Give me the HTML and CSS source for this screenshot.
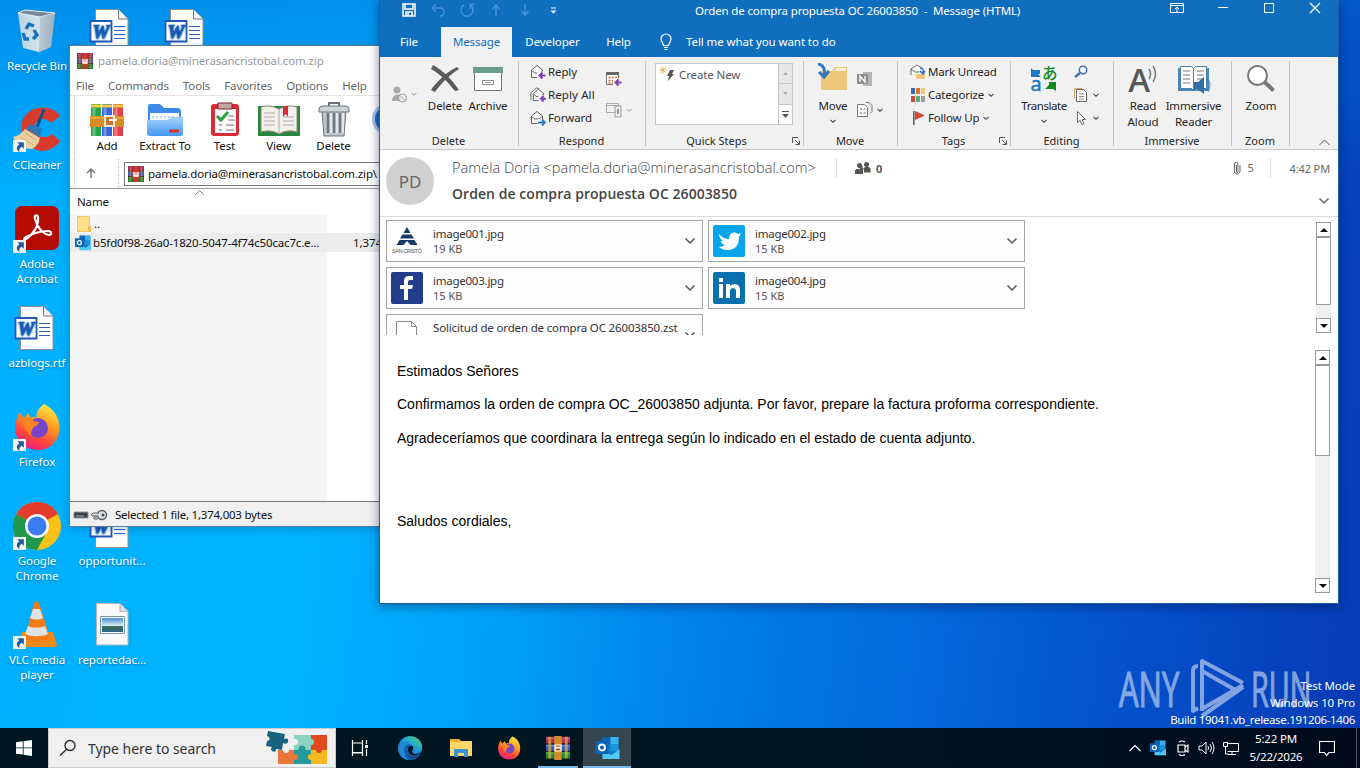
FILE: index.html
```html
<!DOCTYPE html>
<html lang="en">
<head>
<meta charset="utf-8">
<title>Desktop</title>
<link rel="stylesheet" href="styles.css">
</head>
<body>
<svg width="0" height="0" class="defs">
  <defs>
    <linearGradient id="fox" x1="0.8" y1="0" x2="0.3" y2="1"><stop offset="0" stop-color="#fff04a"/><stop offset=".4" stop-color="#ff9a1e"/><stop offset=".75" stop-color="#ff4040"/><stop offset="1" stop-color="#e3208c"/></linearGradient>
    <linearGradient id="edge" x1="0" y1="1" x2="1" y2="0"><stop offset="0" stop-color="#0c59a4"/><stop offset=".5" stop-color="#1b9de2"/><stop offset="1" stop-color="#5bd95b"/></linearGradient>
    <linearGradient id="fold" x1="0" y1="0" x2="0" y2="1"><stop offset="0" stop-color="#a5d3ff"/><stop offset="1" stop-color="#4598ee"/></linearGradient>
    <linearGradient id="bin" x1="0" y1="0" x2="1" y2="0"><stop offset="0" stop-color="#cfd9e0"/><stop offset=".6" stop-color="#e9eef1"/><stop offset="1" stop-color="#8fa3b1"/></linearGradient>
    <linearGradient id="sky" x1="0" y1="0" x2="0" y2="1"><stop offset="0" stop-color="#4d8fd0"/><stop offset=".55" stop-color="#d9edf5"/><stop offset=".6" stop-color="#3c6e58"/><stop offset="1" stop-color="#2b6484"/></linearGradient>
  </defs>
  <symbol id="arrow" viewBox="0 0 12 12"><path d="M0 0h12v12H0z" fill="#f4f4f4"/><path d="M4 2h6v6L8 6.300C6 7.500 5.500 9 6 11 3 9.500 2.500 6.500 5.800 4z" fill="#225a9c"/></symbol>
  <symbol id="word" viewBox="0 0 48 48"><path d="M7.500 4.500h23L40 14v33.500H7.500z" fill="#fff" stroke="#8a8f96"/><path d="M30.500 4.500V14H40" fill="#f4f4f4" stroke="#777"/><path d="M26 21.500h11M26 25.500h11M26 29.500h11M26 33.500h11" stroke="#2b62ba" stroke-width="1.200"/><path d="M2.500 16h21v20.500h-21z" fill="#fff" stroke="#2058b8" stroke-width="1.800"/><text x="13" y="33" text-anchor="middle" font-family="Liberation Serif,serif" font-weight="bold" font-style="italic" font-size="19" fill="#2058b8" stroke="#2058b8" stroke-width=".7">W</text></symbol>
  <symbol id="rar" viewBox="0 0 32 32"><path d="M0 0h32v11H0z" fill="#a42868"/><path d="M0 11h32v10H0z" fill="#3558c0"/><path d="M0 21h32v11H0z" fill="#218032"/><path d="M0 9h32v2H0zM0 20h32v2H0z" fill="#251a20"/><path d="M3 1h4v30H3zM25 1h4v30h-4z" fill="#d79b38" opacity=".5"/><path d="M11 0h10v32H11z" fill="#c23a25"/><path d="M9 9h14v14H9z" fill="#d8452c"/><path d="M12 12v8h8v-8M16 13v6" fill="none" stroke="#fff" stroke-width="2.600"/></symbol>
  <symbol id="rarbig" viewBox="0 0 32 32"><path d="M0 1h32v9H0z" fill="#b02c5c"/><path d="M0 11h32v9H0z" fill="#3558c0"/><path d="M0 21h32v9H0z" fill="#1f8a38"/><path d="M0 3h32" stroke="#d8608a" stroke-width="1.500"/><path d="M0 13h32" stroke="#6d94e6" stroke-width="1.500"/><path d="M0 23h32" stroke="#55bb55" stroke-width="1.500"/><path d="M0 10h32v1H0zM0 20h32v1H0z" fill="#251a20"/><path d="M3 1h4v29H3zM25 1h4v29h-4z" fill="#e0b040" opacity=".7"/><path d="M11 0h10v32H11z" fill="#d08a2a"/><path d="M12 12h8v3h-8zM12 16h8M12 16v4h8v-4z" fill="#b0571c" stroke="#fff" stroke-width="1.600"/></symbol>
  <symbol id="outlook" viewBox="0 0 24 24"><path d="M7 1h16v20H7z" fill="#1678c9"/><path d="M7 1h8v7H7z" fill="#0b62b0"/><path d="M15 1h8v7h-8z" fill="#38b2ef"/><path d="M15 8h8v7h-8z" fill="#1596dc"/><path d="M7 15l9 4 8-6v10H7z" fill="#53c9f5"/><path d="M0 5h13v13H0z" fill="#0864b8"/><circle cx="6.500" cy="11.500" r="3" fill="none" stroke="#fff" stroke-width="1.900"/></symbol>
  <symbol id="firefox" viewBox="0 0 48 48"><path d="M31 1C43 7 48 17 46 30 44 40 35 47 25 47 12 47 2 38 2 24 2 18 5 15 6 9l5 6 4-5 3 5c4-2 5-1 6 0-2-5 2-10 7-14z" fill="url(#fox)"/><circle cx="25" cy="25" r="10" fill="#7645c9"/><path d="M8 16c5-2 10-1 13 2l5 1c-1 4-5 4-6 6-2 3-3 6 0 9-6-3-9-9-12-18z" fill="#ff831f"/></symbol>
  <symbol id="chev" viewBox="0 0 8 6"><path d="M1.500 2L4 4.200 6.500 2" fill="none" stroke="currentColor" stroke-width="1.100"/></symbol>
  <symbol id="chevbig" viewBox="0 0 12 8"><path d="M1.500 1.500L6 6l4.500-4.500" fill="none" stroke="currentColor" stroke-width="1.500"/></symbol>
  <symbol id="env" viewBox="0 0 16 16"><path d="M1.500 6v7.500h11V6L7 1.500z" fill="#fafafa" stroke="#5d5d5d"/><path d="M2 6.500L4.500 9h5L12 6.500" fill="none" stroke="#5d5d5d"/></symbol>
  <symbol id="back" viewBox="0 0 16 16"><path d="M7 7.500h9v8H7z" fill="#f6f6f6"/><path d="M15.500 11.500H10M12.500 8.500l-3 3 3 3" fill="none" stroke="#7c3db4" stroke-width="1.900"/></symbol>
  <symbol id="launch" viewBox="0 0 8 8"><path d="M.5 6V.5H6M3 3l4 4M7.500 3.500v4h-4" fill="none" stroke="#555"/></symbol>
</svg>

<main class="desktop">
  <div class="shortcuts">
    <div class="cell c1 r1"><svg viewBox="0 0 48 48"><path d="M5 8L42 8 38 42 26 47 10 43z" fill="url(#bin)" opacity=".9"/><path d="M5 8l7-3 30 3-15 4z" fill="#78899a" stroke="#e8f1f6"/><path d="M27 12l-1 35 12-5 4-34z" fill="#aab8c2" opacity=".65"/><g fill="none" stroke="#1575c0" stroke-width="3.400"><path d="M13 24l3-5 5 2M10 28l2 6h4M20 34l4-4-3-5"/></g></svg><span>Recycle Bin</span></div>
    <div class="cell c1 r2"><svg viewBox="0 0 48 48"><path d="M47 12C38-1 14 1 9 18c-2 15 6 27 19 29 8 0 15-4 19-10l-8-7c-6 6-18 3-18-7 1-8 12-11 17-4z" fill="#d83b2b"/><path d="M31 5L24 23" stroke="#174f86" stroke-width="3"/><path d="M17 20l12 5-2 8-14-8z" fill="#3179b4"/><path d="M0 33c5-1 9-4 12-8l15 9c-1 5-4 9-8 11l-12-1z" fill="#ecd0a2"/><path d="M8 33l12 8M12 29l11 7" stroke="#cda670"/><use href="#arrow" x="0" y="36" width="13" height="13"/></svg><span>CCleaner</span></div>
    <div class="cell c1 r3"><svg viewBox="0 0 48 48"><rect x="2" y="1" width="44" height="44" rx="7" fill="#b30b00"/><path d="M13 34c8-5 13-14 12-22-1-3-4-2-3 2 3 9 8 15 14 16 3 0 3-4-1-4-9 0-16 3-22 6-3 2-2 4 0 2z" fill="none" stroke="#fff" stroke-width="2.200"/><use href="#arrow" x="0" y="35" width="13" height="13"/></svg><span>Adobe<br>Acrobat</span></div>
    <div class="cell c1 r4"><svg viewBox="0 0 48 48"><use href="#word"/></svg><span>azblogs.rtf</span></div>
    <div class="cell c1 r5"><svg viewBox="0 0 48 48"><use href="#firefox"/><use href="#arrow" x="0" y="36" width="13" height="13"/></svg><span>Firefox</span></div>
    <div class="cell c1 r6"><svg viewBox="0 0 48 48"><circle cx="24" cy="24" r="24" fill="#fbc116"/><path d="M24 24L3.200 12A24 24 0 0 1 44.800 12z" fill="#e33b2e"/><path d="M3.200 12A24 24 0 0 0 24 48L34 30 24 24z" fill="#23974c"/><circle cx="24" cy="24" r="12" fill="#fff"/><circle cx="24" cy="24" r="9.500" fill="#3b7df0"/><use href="#arrow" x="0" y="35" width="13" height="13"/></svg><span>Google<br>Chrome</span></div>
    <div class="cell c1 r7"><svg viewBox="0 0 48 48"><path d="M9 31h31l4 13-1 2H6z" fill="#f18a16"/><path d="M21 2q2.500-3 5 0l11 35c-6 5-20 5-25 0z" fill="#f47c13"/><path d="M20 8h7l3 9c-4 2-9 2-13 0zM15 25c5 2 13 2 17 0l3 8c-6 3-17 3-23 0z" fill="#dfe3e6"/><use href="#arrow" x="0" y="35" width="13" height="13"/></svg><span>VLC media<br>player</span></div>
    <div class="cell c2 r1"><svg viewBox="0 0 48 48"><use href="#word"/></svg></div>
    <div class="cell c3 r1"><svg viewBox="0 0 48 48"><use href="#word"/></svg></div>
    <div class="cell c2 r6"><svg viewBox="0 0 48 48"><use href="#word"/></svg><span>opportunit...</span></div>
    <div class="cell c2 r7"><svg viewBox="0 0 48 48"><path d="M8.500 2.500H32l8 8V44H8.500z" fill="#fafafa" stroke="#b0b6ba"/><path d="M32 2.500v8h8" fill="#ddd" stroke="#b0b6ba"/><path d="M12.500 15.500h24v17h-24z" fill="#fff" stroke="#7694ac"/><path d="M14 17h21v14H14z" fill="url(#sky)"/></svg><span>reportedac...</span></div>
  </div>

  <div class="watermark">
    <span class="wm-any">ANY</span>
    <svg width="58" height="62" viewBox="0 0 58 62"><path d="M9 9Q4 9 4 14v40l5-3M13 54V4L54 26M13 14l37 21M54 28L13 52M13 59l41-29" fill="none" stroke="#fff" stroke-width="4" stroke-linejoin="round"/></svg>
    <span class="wm-run">RUN</span>
  </div>
  <div class="build">Test Mode<br>Windows 10 Pro<br><span class="tight">Build 19041.vb_release.191206-1406</span></div>

  <section class="winrar">
    <div class="w-title"><svg width="16" height="16"><use href="#rar"/></svg><span>pamela.doria@minerasancristobal.com.zip</span></div>
    <nav class="w-menu"><span>File</span><span>Commands</span><span>Tools</span><span>Favorites</span><span>Options</span><span>Help</span></nav>
    <div class="w-tools">
      <div class="tool t1"><svg viewBox="0 0 36 36"><path d="M2 2h10v32H2z" fill="#25a34a"/><path d="M13 2h10v32H13z" fill="#3266d8"/><path d="M24 2h10v32H24z" fill="#e43d4b"/><path d="M2 4h10M13 4h10M24 4h10" stroke="#f1cc45" stroke-width="3"/><path d="M5 6v28M16 6v28M27 6v28" stroke="#fff" opacity=".3" stroke-width="3"/><path d="M1 14h34v11H1z" fill="#d98b1f"/><path d="M1 16h34" stroke="#f2c261"/><path d="M16 14h9v10h-9z" fill="#c5782a" stroke="#f8ead4" stroke-width="2"/><path d="M20 18h8" stroke="#f0f0f0" stroke-width="2"/></svg><span>Add</span></div>
      <div class="tool t2"><svg viewBox="0 0 36 36"><path d="M1 4q0-2 2-2h10l4 4h14q3 0 3 4v12H1z" fill="#3c8bea"/><path d="M3 11h29v12H3z" fill="#f6fbff"/><path d="M5 15h25" stroke="#9ab" stroke-dasharray="2 2"/><path d="M0 18h20l4-3h12v16q0 3-3 3H3q-3 0-3-3z" fill="url(#fold)"/><path d="M22 29h10" stroke="#db3232" stroke-width="3"/></svg><span>Extract To</span></div>
      <div class="tool t3"><svg viewBox="0 0 36 36"><rect x="4" y="2" width="28" height="32" rx="3" fill="#d92c3b"/><path d="M8 7h21v24H8z" fill="#fafafa"/><path d="M11 1h14v6H11z" fill="#c5a5a4" stroke="#87222b"/><path d="M10 14l4 4 7-8" fill="none" stroke="#2f9b45" stroke-width="3"/><path d="M21 18h7M21 14h6M12 23h3M19 23h8M12 28h3M19 28h8" stroke="#777"/></svg><span>Test</span></div>
      <div class="tool t4"><svg class="wide" viewBox="0 0 42 36"><path d="M0 4h42v30H0z" fill="#27883d"/><path d="M3 5q9-3 18 2 9-5 18-2v25q-10-3-18 2-8-5-18-2z" fill="#f4f1ec" stroke="#887"/><path d="M21 7v25M6 11h11M6 15h11M6 19h11M6 23h11M25 15h11M25 19h11M25 23h11" stroke="#aaa"/><path d="M25 4h5v11l-2.500-3-2.500 3z" fill="#d82d39"/></svg><span>View</span></div>
      <div class="tool t5"><svg viewBox="0 0 36 36"><path d="M6 9h24l-2 25H8z" fill="#bfc8ce" stroke="#69747e"/><path d="M12 11v20M18 11v20M24 11v20" stroke="#6f7981" stroke-width="2.500"/><path d="M15 11v20M21 11v20M27 11v20" stroke="#fff" stroke-width="1.200"/><path d="M3 7q0-3 4-3h22q4 0 4 3v3H3z" fill="#cbd3d9" stroke="#67727c"/><path d="M13 4V1h10v3" fill="none" stroke="#68737d" stroke-width="2"/></svg><span>Delete</span></div>
      <div class="tool t6"><svg viewBox="0 0 36 36"><circle cx="16" cy="17" r="14.500" fill="#2469c7" stroke="#a9c4e2" stroke-width="3"/></svg><span>Find</span></div>
    </div>
    <div class="w-addr"><div class="up"><svg width="12" height="12" viewBox="0 0 12 12"><path d="M6 11V2M2 6l4-4 4 4" fill="none" stroke="#777" stroke-width="1.500"/></svg></div><div class="addr"><svg width="16" height="16"><use href="#rar"/></svg><span>pamela.doria@minerasancristobal.com.zip\</span></div></div>
    <div class="w-list">
      <div class="w-head"><span>Name</span><svg class="sort" width="9" height="5" viewBox="0 0 9 5"><path d="M.5 4.500l4-4 4 4" fill="none" stroke="#777"/></svg></div>
      <div class="w-row"><svg width="14" height="16" viewBox="0 0 14 16"><path d="M0 0h13v16H0z" fill="#ffdf8a"/><path d="M11 10h3v6h-3z" fill="#eebd4f"/><path d="M.5.500h12v15H.5z" fill="none" stroke="#eec663"/></svg><span>..</span></div>
      <div class="w-row sel"><svg width="16" height="16"><use href="#outlook"/></svg><span class="fname">b5fd0f98-26a0-1820-5047-4f74c50cac7c.e...</span><span class="size">1,374,003</span></div>
    </div>
    <div class="w-status"><svg width="35" height="14" viewBox="0 0 35 14"><path d="M1 4h14v6H1z" fill="#34404a" stroke="#999"/><path d="M3 8h8" stroke="#a8b6bf"/><circle cx="29" cy="7" r="4.500" fill="#ddd" stroke="#596168" stroke-width="1.400"/><circle cx="30" cy="7" r="1.500" fill="#555"/><path d="M25 5h-5l-2 2 2 1h5M24 9h-3v2h4" fill="#ddd" stroke="#596168"/></svg><span>Selected 1 file, 1,374,003 bytes</span></div>
  </section>

  <section class="mail">
    <header class="o-title">
      <div class="qat">
        <svg width="16" height="16" viewBox="0 0 16 16"><path d="M2 2h12v12H2zM4 2v5h8V2M5 14v-4h6v4M7 11v3" fill="none" stroke="#fff" stroke-width="1.500"/></svg>
        <svg class="dim" width="16" height="16" viewBox="0 0 16 16"><path d="M6 2L2 6l4 4M2.500 6H10q4 0 4 4t-4 4" fill="none" stroke="#4590d8" stroke-width="1.500"/></svg>
        <svg class="dim" width="16" height="16" viewBox="0 0 16 16"><path d="M5 3a6 6 0 1 0 6 0M11 7V2.500h4" fill="none" stroke="#4590d8" stroke-width="1.500"/></svg>
        <svg class="dim" width="16" height="16" viewBox="0 0 16 16"><path d="M8 14V3M4.500 7L8 3l3.500 4" fill="none" stroke="#4590d8" stroke-width="1.500"/></svg>
        <svg class="dim" width="16" height="16" viewBox="0 0 16 16"><path d="M8 2v11M4.500 9L8 13l3.500-4" fill="none" stroke="#4590d8" stroke-width="1.500"/></svg>
        <svg width="16" height="16" viewBox="0 0 16 16"><path d="M5 6h5" stroke="#fff"/><path d="M4.500 8.500h6L7.500 11.500z" fill="#fff"/></svg>
      </div>
      <div class="o-name">Orden de compra propuesta OC 26003850&nbsp; -&nbsp; Message (HTML)</div>
      <div class="wbtns">
        <svg width="14" height="12" viewBox="0 0 14 12"><path d="M.5 1.500h13v9H.5zM.5 3.500h13M7 10V5M5 7l2-2 2 2" fill="none" stroke="#fff"/></svg>
        <svg width="12" height="12" viewBox="0 0 12 12"><path d="M1 5.500h10" stroke="#fff"/></svg>
        <svg width="12" height="12" viewBox="0 0 12 12"><path d="M1.500 1.500h9v9h-9z" fill="none" stroke="#fff"/></svg>
        <svg width="12" height="12" viewBox="0 0 12 12"><path d="M1 1l10 10M11 1L1 11" stroke="#fff" stroke-width="1.200"/></svg>
      </div>
    </header>
    <nav class="tabs"><span class="tab tb1">File</span><span class="tab active">Message</span><span class="tab tb3">Developer</span><span class="tab tb4">Help</span><svg width="14" height="18" viewBox="0 0 14 18"><path d="M4.500 12.500C4.500 10 2 9 2 6a5 5 0 0 1 10 0c0 3-2.500 4-2.500 6.500zM5 14.500h4M5.500 16.500h3" fill="none" stroke="#fff" stroke-width="1.200"/></svg><span class="tell">Tell me what you want to do</span></nav>

    <div class="ribbon">
      <div class="grp g1"><div class="gbody">
        <div class="junk"><svg width="16" height="17" viewBox="0 0 16 17"><circle cx="6" cy="4" r="3.500" fill="#aaa"/><path d="M1 15c0-8 10-8 10-3v3z" fill="#aaa"/><circle cx="11.500" cy="12" r="4" fill="#eee" stroke="#999"/><path d="M9 9.500l5 5" stroke="#999"/></svg><svg class="cv pale" width="8" height="6"><use href="#chev"/></svg></div>
        <div class="big b-del"><svg width="32" height="32" viewBox="0 0 32 32"><path d="M4 2c9 5 18 13 26 25l-4 1C18 18 11 11 2 6z" fill="#5b5b5b"/><path d="M28 4l2 2C21 12 12 20 6 29l-4-2C9 17 18 9 28 4z" fill="#5b5b5b"/></svg><span>Delete</span></div>
        <div class="big b-arc"><svg width="32" height="32" viewBox="0 0 32 32"><path d="M2.500 9h27v18.500h-27z" fill="#fff" stroke="#777"/><path d="M1 4h30v6H1z" fill="#6aa08d"/><path d="M10.500 17.500h11v4h-11z" fill="#fff" stroke="#888"/><path d="M13 19.500h6" stroke="#999"/></svg><span>Archive</span></div>
      </div><div class="glabel">Delete</div></div>
      <div class="grp g2"><div class="gbody">
        <div class="rows"><div><svg width="16" height="16"><use href="#env"/><use href="#back"/></svg><span>Reply</span></div><div><svg width="16" height="16" viewBox="-2 -1 17 17"><path d="M-1 13V5l6-5 3 1" fill="none" stroke="#666"/><use href="#env" width="16" height="16"/><use href="#back" width="16" height="16"/></svg><span class="ra">Reply All</span></div><div><svg width="16" height="16" viewBox="0 0 16 16"><use href="#env"/><path d="M7.500 9h8v7h-8z" fill="#f6f6f6"/><path d="M8 12.500h6M12 9.500l3 3-3 3" fill="none" stroke="#2f75bd" stroke-width="1.900"/></svg><span>Forward</span></div></div>
        <div class="pair"><svg width="16" height="16" viewBox="0 0 16 16"><path d="M.5 2.500h12v11H.5z" fill="#fff" stroke="#777"/><path d="M0 1h13v3H0z" fill="#666"/><path d="M2.500 6.500h9M2.500 9.500h6M2.500 12h5" stroke="#d46a31" stroke-width="1.500" stroke-dasharray="2 1.200"/><use href="#back"/></svg><div><svg width="16" height="16" viewBox="0 0 16 16"><path d="M.5 1.500h12v9H.5zM.5 3.500h12" fill="none" stroke="#aaa"/><path d="M9 4h6v11H9z" fill="#eee" stroke="#999"/><path d="M11 7h2v5h-2z" fill="#999"/></svg><svg class="cv pale" width="8" height="6"><use href="#chev"/></svg></div></div>
      </div><div class="glabel">Respond</div></div>
      <div class="grp g3"><div class="gbody"><div class="quick"><div class="qmain"><svg width="16" height="16" viewBox="0 0 16 16"><path d="M11 4h4l-2 4h2l-6 7 1-5H8z" fill="#555"/><path d="M4 0v8M0 4h8M1 1l6 6M7 1L1 7" stroke="#e3a953" stroke-width=".8"/></svg><span>Create New</span></div><div class="qscroll"><i><svg width="5" height="3"><path d="M0 3l2.500-3L5 3z" fill="#aaa"/></svg></i><i><svg width="5" height="3"><path d="M0 0h5L2.500 3z" fill="#aaa"/></svg></i><i><svg width="7" height="7"><path d="M0 .5h7" stroke="#555"/><path d="M0 3h7L3.500 7z" fill="#555"/></svg></i></div></div></div><div class="glabel gq">Quick Steps<svg class="launch" width="8" height="8"><use href="#launch"/></svg></div></div>
      <div class="grp g4"><div class="gbody">
        <div class="big b-mov"><svg width="32" height="32" viewBox="0 0 32 32"><path d="M4 8h11l3-4h12v23H4z" fill="#efc77c"/><path d="M17 8l3-3h9v3z" fill="#fff3dd"/><path d="M1 1q8 1 6 12M2 9l5 5 5-6" fill="none" stroke="#3575bd" stroke-width="3"/></svg><span>Move</span><svg class="cv" width="8" height="6"><use href="#chev"/></svg></div>
        <div class="pair p4"><svg width="16" height="16" viewBox="0 0 16 16"><path d="M6 1h9v14H6z" fill="#b4b4b4"/><path d="M0 3h11v10H0z" fill="#8d8d8d"/><path d="M3 11V5l5 6V5" fill="none" stroke="#fff" stroke-width="1.300"/></svg><div><svg width="16" height="16" viewBox="0 0 16 16"><path d="M.5 2.500h7l3 3v9H.5z" fill="#fff" stroke="#777"/><path d="M3 7h2M3 11h2M6.500 7h2M6.500 11h2" stroke="#555"/><path d="M9 .5h3l3 3v6l-2 2" fill="none" stroke="#777"/></svg><svg class="cv" width="8" height="6"><use href="#chev"/></svg></div></div>
      </div><div class="glabel">Move</div></div>
      <div class="grp g5"><div class="gbody">
        <div class="rows"><div><svg width="16" height="16" viewBox="0 0 16 16"><path d="M1 11V5l6-4 5 3" fill="#fff" stroke="#666"/><path d="M1 5l4 3h4" fill="none" stroke="#666"/><path d="M6 10h9v5H6z" fill="#efc77c"/><path d="M10 4q4 0 3 5M10 7l3 3 2-3" fill="none" stroke="#3575bd" stroke-width="1.500"/></svg><span>Mark Unread</span></div><div><svg width="16" height="16" viewBox="0 0 16 16"><path d="M1 1h4v6H1z" fill="#2f6ebb"/><path d="M6 1h4v6H6z" fill="#e27126"/><path d="M11 1h4v6h-4z" fill="#efc77c"/><path d="M1 9h4v6H1z" fill="#cf4a38"/><path d="M6 9h4v6H6z" fill="#63a87c"/><path d="M11 9h4v6h-4z" fill="#9d9d9d"/></svg><span>Categorize</span><svg class="cv" width="8" height="6"><use href="#chev"/></svg></div><div><svg width="16" height="16" viewBox="0 0 16 16"><path d="M3.800 1v14" stroke="#555" stroke-width="1.500"/><path d="M5 1l10 4.500L5 10z" fill="#d54a35"/></svg><span>Follow Up</span><svg class="cv" width="8" height="6"><use href="#chev"/></svg></div></div>
      </div><div class="glabel">Tags<svg class="launch" width="8" height="8"><use href="#launch"/></svg></div></div>
      <div class="grp g6"><div class="gbody">
        <div class="big b-tra"><svg width="32" height="32" viewBox="0 0 32 32"><path d="M3 5l2 2h7v4h-2l3 3H3z" fill="#1979ca"/><path d="M28 28l-3-2h-8l4-4v-3h7z" fill="#0f8a20"/><text x="14" y="16" font-family="Noto Sans CJK JP,sans-serif" font-weight="500" font-size="15.500" fill="#0f8a20">あ</text><text x="2.500" y="28" font-family="Noto Sans,sans-serif" font-size="20" fill="#1979ca" stroke="#1979ca" stroke-width=".4">a</text></svg><span>Translate</span><svg class="cv" width="8" height="6"><use href="#chev"/></svg></div>
        <div class="rows r6b"><div><svg width="14" height="14" viewBox="0 0 14 14"><circle cx="9" cy="5" r="3.700" fill="#fff" stroke="#3a72b5" stroke-width="1.500"/><path d="M6 8l-5 4" stroke="#3a72b5" stroke-width="2.500"/></svg></div><div><svg width="14" height="16" viewBox="0 0 14 16"><path d="M.5 11V1.500H8" fill="none" stroke="#dca365"/><path d="M2.500 2.500h7l3 3v9h-10z" fill="#fff" stroke="#666"/><path d="M5 7h5M5 9.500h5M5 12h5" stroke="#888"/></svg><svg class="cv" width="8" height="6"><use href="#chev"/></svg></div><div><svg width="14" height="16" viewBox="0 0 14 16"><path d="M3.500 1.500v11l2.500-2 2 4 2-1-2-4h3.500z" fill="#fff" stroke="#666"/></svg><svg class="cv" width="8" height="6"><use href="#chev"/></svg></div></div>
      </div><div class="glabel">Editing</div></div>
      <div class="grp g7"><div class="gbody">
        <div class="big b-read"><svg width="32" height="32" viewBox="0 0 32 32"><text x="12" y="29" text-anchor="middle" font-family="Open Sans,sans-serif" font-weight="600" font-size="33" fill="#575757">A</text><path d="M22 6q3 5 0 10M26 3q5 8 0 16" fill="none" stroke="#777" stroke-width="1.500"/></svg><span>Read<br>Aloud</span></div>
        <div class="big b-imm"><svg width="34" height="32" viewBox="0 0 34 32"><path d="M1 5h31v23H1z" fill="#4a86b8"/><path d="M3.500 3.500h11l2 2 2-2h11v22h-11l-2 2-2-2h-11z" fill="#fff" stroke="#4a7fa5"/><path d="M16.500 6v21M6 8h7M6 12h7M6 16h7M6 20h7M20 8h7M20 12h7M20 16h7" stroke="#777"/><path d="M17 19h4l6-5v17l-6-5h-4z" fill="#346ea5"/><path d="M29 18q3 4 0 8M31 15q4 7 0 14" fill="none" stroke="#4b91c2"/></svg><span>Immersive<br>Reader</span></div>
      </div><div class="glabel">Immersive</div></div>
      <div class="grp g8"><div class="gbody"><div class="big b-zoom"><svg width="32" height="32" viewBox="0 0 32 32"><circle cx="12.500" cy="12.500" r="9.500" fill="#fff" stroke="#777" stroke-width="2"/><path d="M19.500 19l9 8.500" stroke="#777" stroke-width="4"/></svg><span>Zoom</span></div></div><div class="glabel">Zoom</div></div>
      <div class="collapse"><svg width="11" height="7" viewBox="0 0 11 7"><path d="M.5 6l5-5 5 5" fill="none" stroke="#555"/></svg></div>
    </div>

    <div class="info">
      <div class="avatar">PD</div>
      <div class="who"><div class="from"><span class="sender">Pamela Doria &lt;pamela.doria@minerasancristobal.com&gt;</span><div class="ppl"><svg width="16" height="14" viewBox="0 0 16 14"><circle cx="4.500" cy="4.500" r="2.500" fill="#555"/><circle cx="11.500" cy="3.500" r="2.500" fill="#555"/><path d="M0 13V9.500q2-3 4.500-1Q7-1 8 9v4z" fill="#555"/><path d="M9 11.500V9L8 7.500Q11.500 4.500 15.500 7v4.500z" fill="#555"/></svg><b>0</b></div></div><div class="subject">Orden de compra propuesta OC 26003850</div></div>
      <div class="meta"><div><svg width="8" height="15" viewBox="0 0 8 15"><path d="M3.500 4v7q.5 1.500 1.500 0V3Q4-.5 1.500 2v9q2.500 4.500 5.500 0V4" fill="none" stroke="#666"/></svg><span class="cnt">5</span><span class="time">4:42 PM</span></div><svg width="12" height="8"><use href="#chevbig"/></svg></div>
    </div>

    <div class="attach">
      <div class="cards">
        <div class="card"><svg width="32" height="32" viewBox="0 0 32 32"><path d="M0 0h32v32H0z" fill="#fff"/><path d="M16 2l3.500 6h-7zM11.500 9.500h9l2.500 4H9zM8.500 15h15l3 5h-7l-3.500-4-3.500 4h-7z" fill="#173a66"/><text x="1" y="28" textLength="30" font-family="Liberation Sans,sans-serif" font-size="5.500" fill="#555">SAN CRISTÓ</text></svg><p>image001.jpg<small>19 KB</small></p><svg class="dd" width="12" height="8"><use href="#chevbig"/></svg></div>
        <div class="card"><svg width="32" height="32" viewBox="0 0 32 32"><rect width="32" height="32" rx="2" fill="#08a5ec"/><path d="M6 9q4 5 10 5c0-7 6-8 9-5l3-1-2 4q0 13-12 13-5 0-8-3 4 0 6-2-4-1-4-4h2q-4-3-4-7z" fill="#fff"/></svg><p>image002.jpg<small>15 KB</small></p><svg class="dd" width="12" height="8"><use href="#chevbig"/></svg></div>
        <div class="card"><svg width="32" height="32" viewBox="0 0 32 32"><rect width="32" height="32" rx="2" fill="#233d8d"/><path d="M13 28V17H9v-4h4V9q0-5 5-5h4v4h-3q-2 0-2 2v3h5l-1 4h-4v11z" fill="#fff"/></svg><p>image003.jpg<small>15 KB</small></p><svg class="dd" width="12" height="8"><use href="#chevbig"/></svg></div>
        <div class="card"><svg width="32" height="32" viewBox="0 0 32 32"><rect width="32" height="32" rx="2" fill="#0871ad"/><path d="M6 12h4v14H6zM6 6h4v4H6zM13 12h4v2q5-4 9 0 1 2 1 4v8h-4v-8q-3-4-6 0v8h-4z" fill="#fff"/></svg><p>image004.jpg<small>15 KB</small></p><svg class="dd" width="12" height="8"><use href="#chevbig"/></svg></div>
        <div class="card zst"><svg width="32" height="32" viewBox="0 0 32 32"><path d="M5.500 2.500h15l5 5V31h-20z" fill="#fff" stroke="#888"/><path d="M20.500 2.500v5h5" fill="none" stroke="#888"/></svg><p>Solicitud de orden de compra OC 26003850.zst<small>1 MB</small></p><svg class="dd" width="12" height="8"><use href="#chevbig"/></svg></div>
      </div>
      <div class="scroll s1"><i class="upb"></i><b></b><em></em><i class="dnb"></i></div>
    </div>

    <div class="body">
      <div class="text"><p>Estimados Señores</p><p>Confirmamos la orden de compra OC_26003850 adjunta. Por favor, prepare la factura proforma correspondiente.</p><p>Agradeceríamos que coordinara la entrega según lo indicado en el estado de cuenta adjunto.</p><p class="bye">Saludos cordiales,</p></div>
      <div class="scroll s2"><i class="upb"></i><b></b><em></em><i class="dnb"></i></div>
    </div>
  </section>
</main>

<footer class="taskbar">
  <div class="start"><svg width="16" height="16" viewBox="0 0 16 16"><path d="M0 2.300L6.800 1.300v6.200H0zM7.600 1.200L16 0v7.500H7.600zM0 8.300h6.800v6.300L0 13.700zM7.600 8.300H16V16l-8.400-1.200z" fill="#fff"/></svg></div>
  <div class="search"><svg width="18" height="18" viewBox="0 0 18 18"><circle cx="11" cy="6.500" r="5" fill="none" stroke="#222" stroke-width="1.300"/><path d="M7.500 10.500L1 16.500" stroke="#222" stroke-width="1.300"/></svg><span>Type here to search</span>
    <svg class="puzzle" width="64" height="36" viewBox="0 0 64 36"><path d="M3 1l17 3-1 5q5-2 4 3-1 3-5 1l-1 7-6-1q0 4-4 2-2-2 0-4l-6-1 1-5q4-1 2-4l-2-1z" fill="#18637f"/><path d="M13 20h16v14H13z" fill="#e9763a"/><path d="M29 5h18v15H29z" fill="#8bd3bf"/><path d="M46 5h16v15H46z" fill="#df4b1f"/><path d="M29 20h17v14H29z" fill="#229a9c"/><path d="M46 20h16v14H46z" fill="#f5b91f"/><circle cx="30" cy="27" r="3" fill="#e9763a"/><circle cx="37" cy="19" r="3.500" fill="#229a9c"/><circle cx="46" cy="12" r="3" fill="#8bd3bf"/><circle cx="54" cy="20" r="3" fill="#df4b1f"/><circle cx="46" cy="27" r="3" fill="#f5b91f"/><circle cx="21" cy="20" r="3" fill="#f0f0f0"/><circle cx="30" cy="12" r="3" fill="#f0f0f0"/></svg></div>
  <div class="apps">
    <div class="tv"><svg width="18" height="18" viewBox="0 0 18 18"><path d="M1.500 1v3h10V1M1.500 17v-3h10v3M1.500 4.500v9h10v-9M15.500 1v4M15.500 10v7" fill="none" stroke="#fff" stroke-width="1.200"/><path d="M14 6h3v3h-3z" fill="#fff"/></svg></div>
    <div class="ed"><svg width="26" height="26" viewBox="0 0 26 26"><circle cx="13" cy="13" r="12" fill="#0f5cab"/><path d="M1 12C3-1 21-3 25 10c1 7-3 9-7 9-4-.5-4-2-2.500-4C17 7 4 6 1 12z" fill="url(#edge)"/><path d="M15.500 15c-1.500 2-1 4 2.500 4 3 0 5-1 6-3-1 3-4 7-8 8-6-1-7-9-.5-9z" fill="#1a4f93"/><path d="M11 14q1-4 5-3 1 2-.500 4-1.500 3 2.500 4 2 0 5-1.500-4 4-8 2.500-4-2-4-6z" fill="#051722"/><path d="M1 13C3 6 10 6 13 9c-8 1-7 11-1 16C6 25 1 20 1 13z" fill="#2487d4"/></svg></div>
    <div><svg width="22" height="20" viewBox="0 0 22 20"><path d="M0 1h9l2 2h11v15H0z" fill="#ffd867"/><path d="M0 1h9l2 3H0z" fill="#f2ae2e"/><path d="M4 11h14v8h-4v-4H8v4H4z" fill="#3c95d4"/></svg></div>
    <div><svg width="24" height="24"><use href="#firefox"/></svg></div>
    <div class="open"><svg width="24" height="24"><use href="#rarbig"/></svg></div>
    <div class="open cur"><svg width="25" height="24"><use href="#outlook"/></svg></div>
  </div>
  <div class="tray">
    <svg width="14" height="14" viewBox="0 0 14 14"><path d="M1.500 10L7 4.500l5.500 5.500" fill="none" stroke="#fff" stroke-width="1.200"/></svg>
    <svg width="16" height="16"><use href="#outlook"/></svg>
    <svg class="cam" width="14" height="16" viewBox="0 0 14 16"><path d="M2 5h7v7H2zM9 7l3-2v7L9 10M3 2q3-2 6 0M3 14.500q3 2 6 0" fill="none" stroke="#fff" stroke-width="1.200"/></svg>
    <svg width="17" height="14" viewBox="0 0 17 14"><path d="M1 5h3l4-4v12L4 9H1zM10 5q1 2 0 4M12 3q3 4 0 8M14 1q4 6 0 12" fill="none" stroke="#fff"/></svg>
    <svg width="16" height="16" viewBox="0 0 16 16"><path d="M5 3.500h10.500v8H4.500M9 12v3M5 14.500h8M.5 2.500h4v4h-4zM2.500 7v7h3" fill="none" stroke="#fff"/></svg>
    <div class="clock">5:22 PM<br>5/22/2026</div>
    <svg width="16" height="17" viewBox="0 0 16 17"><path d="M.5 1.500h15v11H10L7.500 15.500 5.500 12.500h-5z" fill="none" stroke="#fff" stroke-width="1.200"/></svg>
  </div>
</footer>
</body>
</html>
```
FILE: styles.css
```css
* { box-sizing: border-box; }
html, body { margin: 0; width: 1360px; height: 768px; overflow: hidden; }
body { font: 11.5px/15px "Noto Sans", "Open Sans", sans-serif; letter-spacing: -.12px; color: #222; display: flex; flex-direction: column; }
svg { display: block; flex: none; }
.defs { position: absolute; }
p { margin: 0; }

.desktop { position: relative; height: 728px; flex: none; overflow: hidden; background: linear-gradient(97deg, #00aefd 0%, #00b4ff 24%, #00a4fa 38%, #0084ec 52%, #0367db 70%, #054dc8 86%, #063bb5 100%); }
.desktop::before { content: ""; position: absolute; inset: 0; background: linear-gradient(180deg, rgba(0,110,215,.5) 0, rgba(0,110,215,0) 190px); }
.shortcuts { position: relative; display: grid; grid-template-columns: 74px 76px 74px; grid-template-rows: repeat(7, 99px); padding-top: 5px; width: 224px; }
.cell { display: flex; flex-direction: column; align-items: center; gap: 5px; color: #fff; text-align: center; text-shadow: 0 1px 2px #0468a8; white-space: nowrap; letter-spacing: -.05px; }
.cell svg { width: 48px; height: 48px; }
.c1.r3 svg, .c1.r5 svg, .c1.r6 svg, .r7 svg { transform: translateY(2px); }
.c1 { grid-column: 1; } .c2 { grid-column: 2; } .c3 { grid-column: 3; }
.r1 { grid-row: 1; } .r2 { grid-row: 2; } .r3 { grid-row: 3; } .r4 { grid-row: 4; } .r5 { grid-row: 5; } .r6 { grid-row: 6; } .r7 { grid-row: 7; }

.watermark { position: absolute; left: 1119px; top: 657px; display: flex; opacity: .5; color: #fff; font: 400 50px/62px "Open Sans", sans-serif; letter-spacing: 0; }
.watermark span { width: 64px; transform-origin: 0 50%; transform: scaleX(.62); -webkit-text-stroke: 1.2px #fff; }
.watermark .wm-run { transform: scaleX(.575); }
.watermark svg { margin: 0 4px 0 6px; }
.build { position: absolute; right: 5px; top: 677px; color: #fff; text-align: right; line-height: 17px; white-space: nowrap; }
.tight { letter-spacing: -.33px; }

.winrar { position: absolute; left: 69px; top: 45px; width: 420px; height: 482px; background: #fff; border: 1px solid #5a7d99; border-right: 0; display: flex; flex-direction: column; box-shadow: 0 2px 8px rgba(0,40,90,.25); white-space: nowrap; color: #111; }
.w-title { display: flex; align-items: center; gap: 5px; height: 29px; padding-left: 7px; color: #999; }
.w-menu { display: flex; height: 21px; align-items: center; gap: 14px; padding-left: 6px; color: #666; border-bottom: 1px solid #e4e4e4; }
.w-tools { display: flex; height: 63px; margin-left: 4px; border-left: 1px dotted #bbb; }
.tool { display: flex; flex-direction: column; align-items: center; padding-top: 6px; }
.tool svg { width: 36px; height: 36px; }
.tool svg.wide { width: 42px; }
.t1 { width: 64px; } .t2 { width: 52px; } .t3 { width: 67px; } .t4 { width: 41px; } .t5 { width: 69px; } .t6 { width: 43px; }
.w-addr { display: flex; height: 29px; margin-left: 4px; border-left: 1px dotted #bbb; align-items: center; letter-spacing: -.14px; }
.up { width: 44px; height: 29px; padding: 8px 0 0 10px; border-right: 1px dotted #bbb; }
.addr { display: flex; align-items: center; gap: 4px; height: 24px; flex: 1; margin-left: 5px; padding-left: 3px; border: 1px solid #777; }
.w-list { flex: 1; border-top: 1px solid #999; border-bottom: 1px solid #777; background: linear-gradient(90deg, #f5f5f5 257px, #fff 257px); }
.w-head { display: flex; height: 25px; background: #fff; padding: 5px 0 0 7px; }
.sort { margin: -4px 0 0 86px; }
.w-row { display: flex; align-items: center; height: 19px; gap: 3px; padding-left: 7px; }
.w-row.sel { padding-left: 5px; gap: 2px; background: #ececec; }
.fname { width: 258px; letter-spacing: -.16px; }
.size { letter-spacing: -.1px; }
.w-status { display: flex; align-items: center; height: 24px; background: #f0f0f0; padding-left: 3px; gap: 7px; letter-spacing: -.23px; padding-top: 1px; }

.mail { position: absolute; left: 379px; top: 0; width: 960px; height: 604px; background: #fff; border: 1px solid #1a5fa8; border-top: 0; display: flex; flex-direction: column; box-shadow: 0 2px 10px rgba(0,20,70,.5); white-space: nowrap; }
.o-title { display: flex; height: 27px; background: #106ebe; color: #fff; flex: none; }
.qat { display: flex; gap: 13px; padding: 2px 0 0 21px; width: 315px; }
.o-name { width: 475px; padding-top: 3px; letter-spacing: -.14px; }
.wbtns { display: flex; gap: 34px; padding-top: 2px; }
.wbtns svg:first-child { margin-right: -1px; }
.tabs { display: flex; height: 30px; background: #106ebe; color: #fff; flex: none; align-items: center; }
.tab { text-align: center; height: 30px; line-height: 30px; letter-spacing: -.1px; }
.tb1 { width: 61px; padding-right: 3px; }
.active { width: 71px; background: #f1f1f1; color: #1068b8; }
.tb3 { width: 81px; } .tb4 { width: 51px; }
.tabs svg { margin-left: 15px; }
.tell { margin-left: 13px; letter-spacing: -.08px; margin-top: -1px; }

.ribbon { display: flex; height: 93px; background: #f1f1f1; border-bottom: 1px solid #c8c8c8; flex: none; color: #262626; }
.grp { position: relative; display: flex; flex-direction: column; padding-top: 4px; }
.grp::after { content: ""; position: absolute; right: 0; top: 4px; width: 1px; height: 85px; background: #c3c3c3; }
.gbody { display: flex; height: 70px; }
.glabel { text-align: center; height: 18px; line-height: 19px; position: relative; font-size: 11px; padding-right: 2px; letter-spacing: 0; }
.gq { padding-right: 17px; }
.launch { position: absolute; right: 4px; top: 6px; }
.g1 { width: 139px; } .g2 { width: 127px; } .g3 { width: 158px; } .g4 { width: 94px; } .g5 { width: 113px; } .g6 { width: 103px; } .g7 { width: 118px; } .g8 { width: 58px; }
.big { display: flex; flex-direction: column; align-items: center; text-align: center; line-height: 16px; padding-top: 2px; }
.big span { margin-top: 3px; }
.cv { color: #555; margin-left: 4px; }
.big .cv { margin: 4px 0 0; }
.pale { color: #bbb; }
.junk { display: flex; align-items: center; padding-left: 11px; width: 46px; gap: 1px; height: 66px; }
.junk .cv { margin-left: 2px; }
.b-del { width: 38px; } .b-arc { width: 48px; }
.rows { display: flex; flex-direction: column; margin-top: -1px; }
.rows > div { display: flex; align-items: center; height: 23px; gap: 2px; }
.rows .cv { margin-left: 1px; }
.ra { letter-spacing: .1px; }
.g2 .rows { padding-left: 11px; width: 87px; }
.pair { display: flex; flex-direction: column; gap: 15px; padding-top: 10px; }
.pair > div { display: flex; align-items: center; }
.pair .cv { margin-left: 3px; }
.quick { display: flex; margin: 2px 0 0 9px; width: 138px; height: 62px; border: 1px solid #c6c6c6; background: #fff; color: #555; }
.qmain { display: flex; flex: 1; padding: 2px 0 0 3px; gap: 4px; }
.qmain span { padding-top: 1px; }
.qscroll { display: flex; flex-direction: column; width: 14px; border-left: 1px solid #c6c6c6; }
.qscroll i { display: flex; flex: 1; align-items: center; justify-content: center; background: #e8e8e8; border-bottom: 1px solid #c6c6c6; }
.qscroll i:last-child { background: #fff; border: 0; }
.b-mov { width: 58px; }
.p4 { margin-left: -5px; }
.g5 .rows { padding-left: 12px; }
.g5 .rows span { letter-spacing: -.2px; }
.b-tra { width: 66px; letter-spacing: -.45px; } .r6b { margin-left: -3px; }
.rows.r6b .cv { margin-left: 2px; }
.b-read { width: 58px; } .b-imm { width: 43px; letter-spacing: -.2px; }
.b-zoom { width: 58px; }
.collapse { flex: 1; display: flex; align-items: flex-end; justify-content: flex-end; padding: 0 8px 3px 0; }

.info { display: flex; height: 67px; border-bottom: 1px solid #dcdcdc; flex: none; color: #555; padding-left: 6px; }
.avatar { width: 48px; height: 48px; border-radius: 50%; background: #d0d0d0; margin-top: 7px; font-size: 17px; line-height: 49px; text-align: center; color: #666; }
.who { margin-left: 18px; flex: 1; }
.from { display: flex; height: 36px; align-items: center; }
.sender { font: 300 14.5px/20px "Open Sans", sans-serif; letter-spacing: .05px; width: 384px; color: #444; }
.ppl { display: flex; gap: 5px; align-items: center; padding-left: 18px; height: 20px; border-left: 1px solid #ddd; font-size: 11px; }
.subject { font: 600 14px/18px "Open Sans", sans-serif; letter-spacing: .06px; color: #444; margin-top: -1px; }
.meta { width: 106px; display: flex; flex-direction: column; align-items: flex-end; padding-right: 8px; color: #666; font-size: 11px; gap: 11px; }
.meta > div { display: flex; align-items: center; height: 36px; }
.cnt { margin-left: 7px; width: 23px; border-right: 1px solid #ddd; height: 20px; line-height: 20px; }
.time { margin-left: 19px; }

.attach { display: flex; height: 118px; overflow: hidden; flex: none; padding: 3px 7px 0 6px; justify-content: space-between; color: #333; }
.cards { display: grid; grid-template-columns: 317px 317px; grid-template-rows: repeat(3, 42px); gap: 5px; height: 115px; overflow: hidden; }
.card { display: flex; align-items: center; border: 1px solid #a6a6a6; background: #fdfdfd; padding-left: 4px; }
.card p { margin-left: 10px; flex: 1; letter-spacing: -.24px; }
.card.zst p { letter-spacing: -.16px; }
.card small { display: block; font-size: 11px; line-height: 16px; color: #555; letter-spacing: 0; }
.dd { margin-right: 6px; color: #555; }
.scroll { width: 15px; display: flex; flex-direction: column; background: #f0f0f0; }
.scroll i { display: flex; align-items: center; justify-content: center; height: 15px; border: 1px solid #999; background: #fff; }
.scroll i::before { content: ""; border: 4px solid transparent; }
.scroll .upb::before { border-top: 0; border-bottom-color: #111; }
.scroll .dnb::before { border-bottom: 0; border-top-color: #111; }
.scroll b { background: #fff; border: 1px solid #999; }
.scroll em { flex: 1; }
.s1 { height: 111px; margin-top: 2px; } .s1 b { height: 68px; }
.body { flex: 1; display: flex; justify-content: space-between; padding: 15px 8px 10px 17px; }
.text { font: 14px/18px "Liberation Sans", Arial, sans-serif; letter-spacing: 0; color: #000; padding-top: 11.6px; }
.text p { margin-bottom: 15.5px; }
.text .bye { margin-top: 65px; }
.s2 b { height: 91px; }

.taskbar { height: 40px; display: flex; background: linear-gradient(90deg, #001722, #001520 60%, #000b1c); color: #fff; }
.start { width: 48px; padding: 12px 0 0 16px; }
.search { width: 288px; background: #f0f0f0; border: 1px solid #ccc; display: flex; align-items: center; padding-left: 10px; font-size: 14px; color: #333; white-space: nowrap; letter-spacing: -.05px; }
.search span { margin-left: 11px; width: 177px; }
.apps { display: flex; }
.apps > div { width: 49px; height: 40px; display: flex; align-items: center; justify-content: center; padding-top: 1px; border-bottom: 2px solid transparent; }
.apps .tv { width: 48px; }
.apps .ed { width: 52px; }
.apps > div:nth-child(4) { width: 48px; }
.apps .open { width: 40px; margin: 0 5px; border-color: #76b9ed; }
.apps .cur { width: 48px; margin: 0; background: #36464f; }
.tray { margin-left: auto; display: flex; align-items: center; border-right: 1px solid #46505c; width: 229px; margin-right: 3px; gap: 8px; }
.cam { margin-left: 2px; }
.clock { text-align: center; line-height: 18px; width: 60px; white-space: nowrap; margin: 0 5px 0 -1px; letter-spacing: -.2px; }
```
